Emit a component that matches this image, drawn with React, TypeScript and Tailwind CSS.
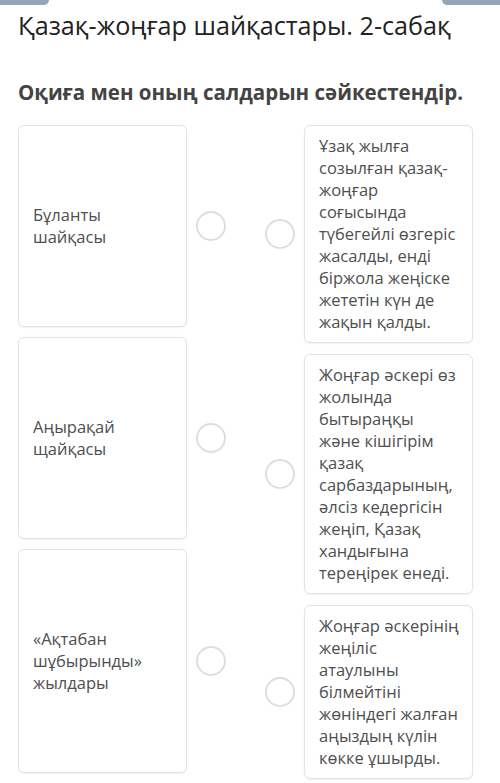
import React from 'react';

type Pair = { event: string[]; eventH: string; result: string[] };

// lines are broken by hand so every card keeps its exact wrap
const pairs: Pair[] = [
  {
    event: ['Бұланты', 'шайқасы'],
    eventH: 'h-[202px]',
    result: [
      'Ұзақ жылға',
      'созылған қазақ-',
      'жоңғар',
      'соғысында',
      'түбегейлі өзгеріс',
      'жасалды, енді',
      'біржола жеңіске',
      'жететін күн де',
      'жақын қалды.',
    ],
  },
  {
    event: ['Аңырақай', 'щайқасы'],
    eventH: 'h-[202px]',
    result: [
      'Жоңғар әскері өз',
      'жолында',
      'бытыраңқы',
      'және кішігірім',
      'қазақ',
      'сарбаздарының,',
      'әлсіз кедергісін',
      'жеңіп, Қазақ',
      'хандығына',
      'тереңірек енеді.',
    ],
  },
  {
    event: ['«Ақтабан', 'шұбырынды»', 'жылдары'],
    eventH: 'h-[224px]',
    result: [
      'Жоңғар әскерінің',
      'жеңіліс',
      'атаулыны',
      'білмейтіні',
      'жөніндегі жалған',
      'аңыздың күлін',
      'көкке ұшырды.',
    ],
  },
];

const Dot = () => (
  <div className="w-[30px] h-[30px] shrink-0 rounded-full border-2 border-[#dedede] bg-white" />
);

const cardCls =
  'w-[169px] flex flex-col rounded-md border border-[#e3e3e3] bg-white shadow-[0_1px_2px_rgba(0,0,0,0.06)] px-[14px] text-[16.5px] leading-[22px] text-[#4f4f4f] whitespace-nowrap';

export default function App() {
  return (
    <div className="w-[500px] h-[783px] bg-white overflow-hidden font-['Open_Sans',sans-serif]">
      <div className="flex justify-between">
        <div className="w-[49px] h-[5px] rounded-br-md bg-[#94a5b7]" />
        <div className="w-[58px] h-[5px] rounded-bl-md bg-[#94a5b7]" />
      </div>

      <h1 className="px-[18px] mt-[2px] text-[25.2px] leading-[36px] text-[#222] whitespace-nowrap">
        Қазақ-жоңғар шайқастары. 2-сабақ
      </h1>

      <h2 className="px-[18px] mt-[36px] text-[20.5px] leading-[26px] font-bold text-[#444] whitespace-nowrap">
        Оқиға мен оның салдарын сәйкестендір.
      </h2>

      <div className="flex px-[18px] mt-[20px] gap-[39px]">
        <div className="flex flex-col gap-[10px]">
          {pairs.map((p, i) => (
            <div key={i} className="flex items-center gap-[9px]">
              <div className={`${cardCls} ${p.eventH} justify-center`}>
                {p.event.map((line) => (
                  <span key={line}>{line}</span>
                ))}
              </div>
              <Dot />
            </div>
          ))}
        </div>

        <div className="flex flex-col gap-[11px]">
          {pairs.map((p, i) => (
            <div key={i} className="flex items-center gap-[9px]">
              <Dot />
              <div className={`${cardCls} py-[9px]`}>
                {p.result.map((line) => (
                  <span key={line}>{line}</span>
                ))}
              </div>
            </div>
          ))}
        </div>
      </div>
    </div>
  );
}
